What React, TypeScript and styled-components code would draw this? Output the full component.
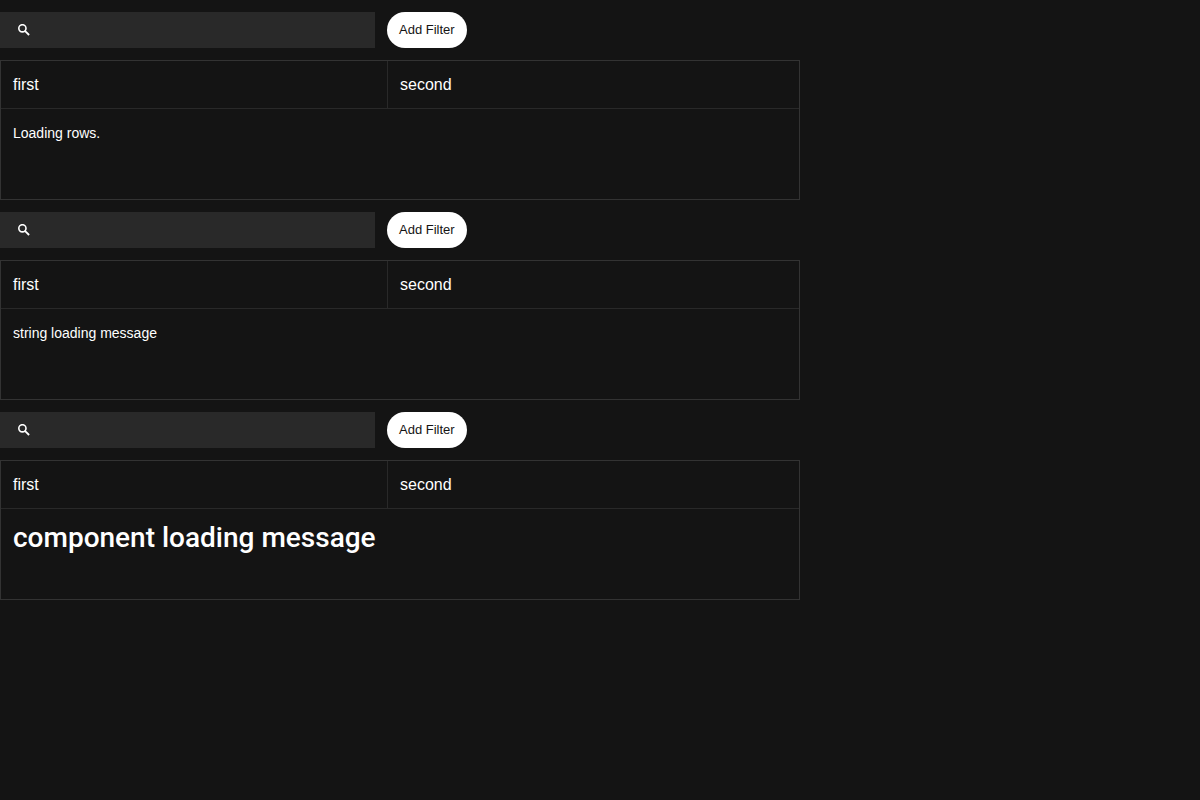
import React, { useId } from "react";
import styled, { createGlobalStyle } from "styled-components";

const GlobalStyle = createGlobalStyle`
  *, *::before, *::after { box-sizing: border-box; }
  body {
    margin: 0;
    background: #141414;
    color: #fff;
    font-family: "Liberation Sans", Arial, sans-serif;
    font-size: 14px;
    line-height: 24px;
  }
`;

const Page = styled.main`
  max-width: 800px;
`;

const TableSection = styled.section`
  display: flex;
  flex-direction: column;
  gap: 12px;
  padding-top: 12px;
`;

const Toolbar = styled.div`
  display: flex;
  gap: 12px;
`;

const SearchField = styled.label`
  display: flex;
  align-items: center;
  flex: 0 1 375px;
  height: 36px;
  padding: 0 12px 0 18px;
  gap: 12px;
  background: #292929;
`;

const SearchInput = styled.input`
  flex: 1;
  min-width: 0;
  border: 0;
  outline: 0;
  background: transparent;
  color: inherit;
  font: inherit;
`;

const FilterButton = styled.button`
  height: 36px;
  padding: 0 12px;
  border: 0;
  border-radius: 18px;
  background: #fff;
  color: #141414;
  font: inherit;
  font-size: 13px;
  white-space: nowrap;
  cursor: pointer;
`;

const DataTable = styled.table`
  width: 100%;
  border: 1px solid #333;
  border-collapse: separate;
  border-spacing: 0;
  table-layout: fixed;
`;

const HeaderCell = styled.th<{ $width?: string }>`
  width: ${({ $width }) => $width ?? "auto"};
  height: 48px;
  padding: 0 12px;
  border-bottom: 1px solid #292929;
  font-size: 16px;
  font-weight: 400;
  text-align: left;

  & + & {
    border-left: 1px solid #292929;
  }
`;

const MessageCell = styled.td`
  height: 90px;
  padding: 12px;
  vertical-align: top;
`;

const LargeMessage = styled.h1`
  margin: 0;
  font-family: Roboto, "Liberation Sans", sans-serif;
  font-size: 28px;
  font-weight: 500;
  line-height: 34px;
`;

function SearchIcon() {
  return (
    <svg width="12" height="12" viewBox="0 0 12 12" fill="none" stroke="#fff" aria-hidden="true">
      <circle cx="4.4" cy="4.3" r="3.6" strokeWidth="1.6" />
      <path d="M6.9 6.8 11.1 11" strokeWidth="1.8" />
    </svg>
  );
}

function LoadingTable({ message }: { message: React.ReactNode }) {
  const searchId = useId();
  return (
    <TableSection>
      <Toolbar>
        <SearchField htmlFor={searchId}>
          <SearchIcon />
          <SearchInput id={searchId} type="text" aria-label="Search" />
        </SearchField>
        <FilterButton type="button">Add Filter</FilterButton>
      </Toolbar>
      <DataTable>
        <thead>
          <tr>
            <HeaderCell scope="col" $width="386px">first</HeaderCell>
            <HeaderCell scope="col">second</HeaderCell>
          </tr>
        </thead>
        <tbody>
          <tr>
            <MessageCell colSpan={2}>{message}</MessageCell>
          </tr>
        </tbody>
      </DataTable>
    </TableSection>
  );
}

export default function App() {
  return (
    <>
      <GlobalStyle />
      <Page>
        <LoadingTable message="Loading rows." />
        <LoadingTable message="string loading message" />
        <LoadingTable message={<LargeMessage>component loading message</LargeMessage>} />
      </Page>
    </>
  );
}
